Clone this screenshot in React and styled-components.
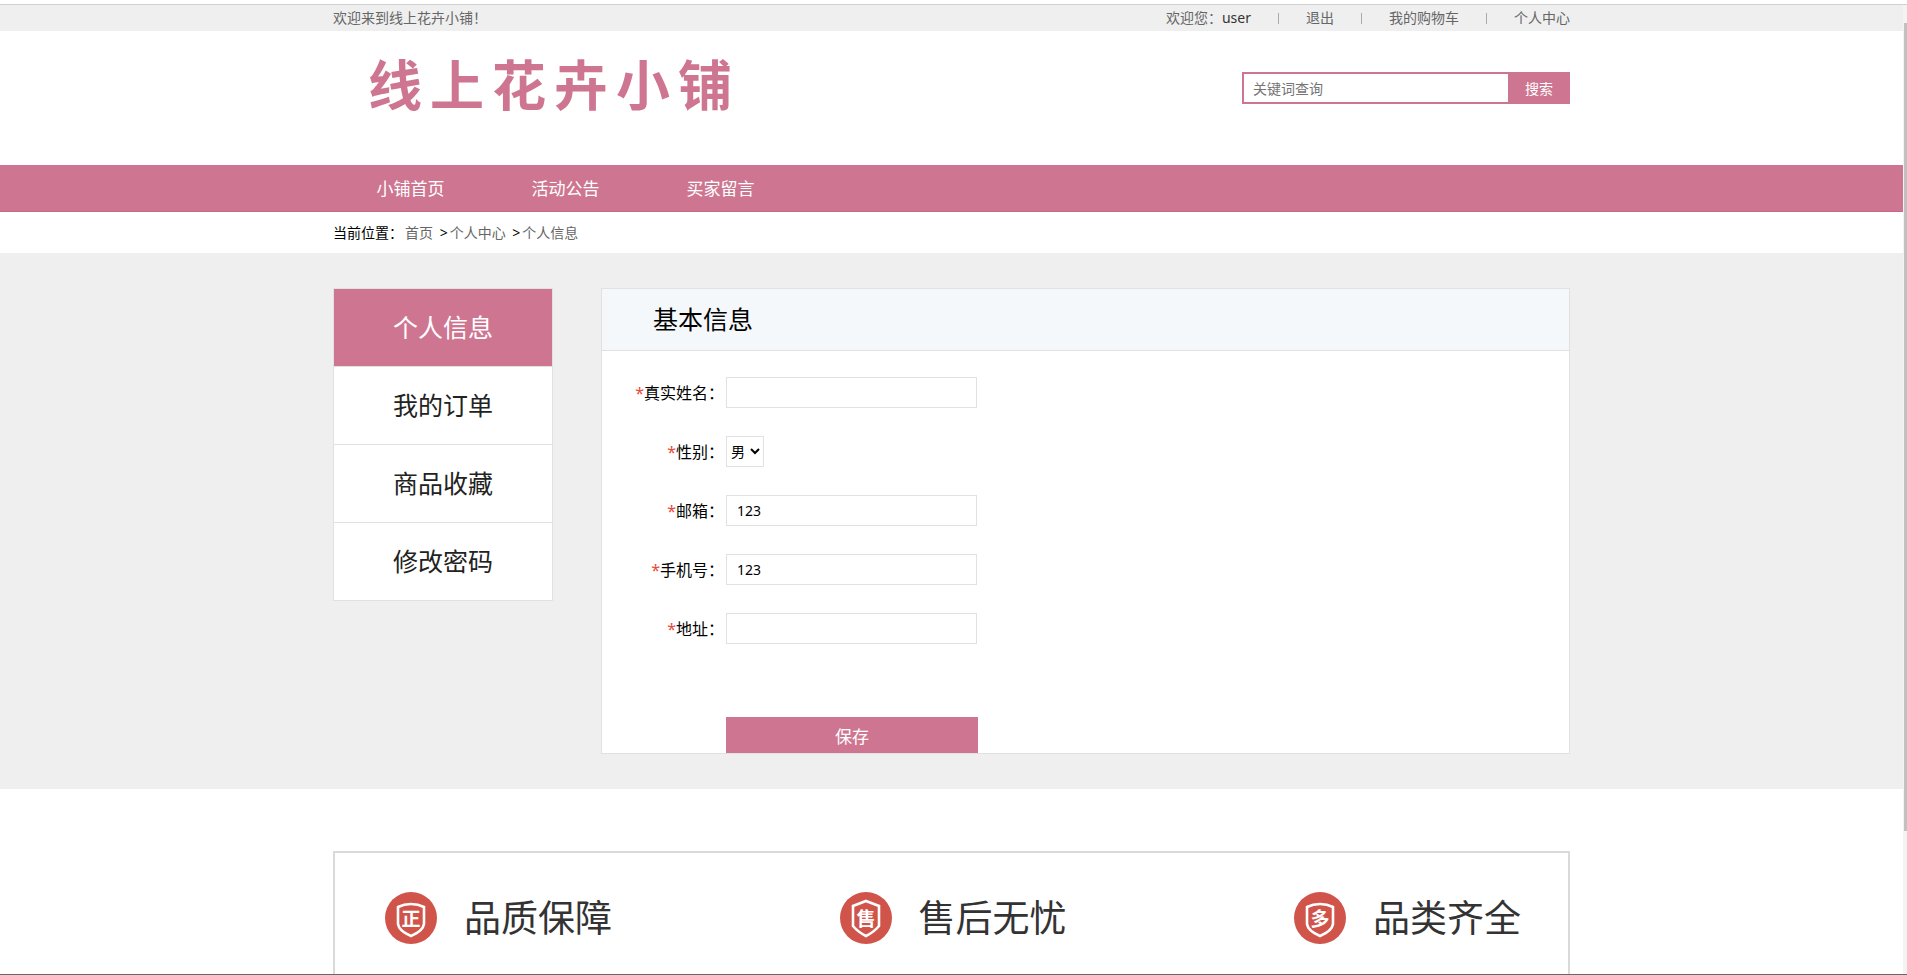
import React, { useState } from 'react';
import styled, { createGlobalStyle } from 'styled-components';

const navItems = ['小铺首页', '活动公告', '买家留言'];
const menuItems = ['个人信息', '我的订单', '商品收藏', '修改密码'];

const roundShield = 'M26 12 Q33 12 39 15 V32 Q38 39 26 44 Q14 39 13 32 V15 Q19 12 26 12 Z';
const sharpShield = 'M26 9 L39 14 V34 Q34 40 26 44 Q18 40 13 34 V14 Z';

const features = [
    { mark: '正', text: '品质保障', shield: roundShield },
    { mark: '售', text: '售后无忧', shield: sharpShield },
    { mark: '多', text: '品类齐全', shield: roundShield },
];

const FeatureIcon = ({ mark, shield }) => (
    <svg width="52" height="52" viewBox="0 0 52 52" aria-hidden="true">
        <circle cx="26" cy="26" r="26" fill="#d0544a" />
        <path d={shield} fill="none" stroke="#fff" strokeWidth="2.6" />
        <text x="26" y="34" textAnchor="middle" fontSize="19" fontWeight="700" fill="#fff">{mark}</text>
    </svg>
);

const App = () => {
    const [form, setForm] = useState({
        name: '',
        gender: '男',
        email: '123',
        phone: '123',
        address: '',
    });

    const handleChange = (e) => {
        setForm({ ...form, [e.target.name]: e.target.value });
    }

    return (
        <>
            <GlobalStyle />
            <Screen>
                <Page>
                    <TopBar>
                        <TopInner>
                            <span>欢迎来到线上花卉小铺！</span>
                            <UserLinks>
                                <span>欢迎您：<a href="#user">user</a></span>
                                <a href="#logout">退出</a>
                                <a href="#cart">我的购物车</a>
                                <a href="#center">个人中心</a>
                            </UserLinks>
                        </TopInner>
                    </TopBar>
                    <Header>
                        <Logo aria-label="线上花卉小铺">
                            {[...'线上花卉小铺'].map((c) => <span key={c}>{c}</span>)}
                        </Logo>
                        <Search onSubmit={(e) => e.preventDefault()}>
                            <input type="text" placeholder="关键词查询" aria-label="关键词查询" />
                            <button type="submit">搜索</button>
                        </Search>
                    </Header>
                    <NavBar>
                        <NavInner>
                            {navItems.map((item) => <a href="#nav" key={item}>{item}</a>)}
                        </NavInner>
                    </NavBar>
                    <Crumbs>
                        当前位置：<a href="#home">首页</a> &gt;<a href="#center">个人中心</a> &gt;<a href="#info">个人信息</a>
                    </Crumbs>
                    <Main>
                        <MainInner>
                            <SideMenu>
                                {menuItems.map((item, i) => (
                                    <MenuLink href="#menu" key={item} $active={i === 0}>{item}</MenuLink>
                                ))}
                            </SideMenu>
                            <Panel>
                                <PanelTitle>基本信息</PanelTitle>
                                <Form onSubmit={(e) => e.preventDefault()}>
                                    <Label htmlFor="name"><i>*</i>真实姓名：</Label>
                                    <TextInput id="name" name="name" value={form.name} onChange={handleChange} />
                                    <Label htmlFor="gender"><i>*</i>性别：</Label>
                                    <SelectInput id="gender" name="gender" value={form.gender} onChange={handleChange}>
                                        <option>男</option>
                                        <option>女</option>
                                    </SelectInput>
                                    <Label htmlFor="email"><i>*</i>邮箱：</Label>
                                    <TextInput id="email" name="email" value={form.email} onChange={handleChange} />
                                    <Label htmlFor="phone"><i>*</i>手机号：</Label>
                                    <TextInput id="phone" name="phone" value={form.phone} onChange={handleChange} />
                                    <Label htmlFor="address"><i>*</i>地址：</Label>
                                    <TextInput id="address" name="address" value={form.address} onChange={handleChange} />
                                    <SaveButton type="submit">保存</SaveButton>
                                </Form>
                            </Panel>
                        </MainInner>
                    </Main>
                    <Features>
                        {features.map((f) => (
                            <Feature key={f.mark}>
                                <FeatureIcon mark={f.mark} shield={f.shield} />
                                <span>{f.text}</span>
                            </Feature>
                        ))}
                    </Features>
                </Page>
                <ScrollTrack>
                    <ScrollThumb />
                </ScrollTrack>
            </Screen>
        </>
    )
}

const GlobalStyle = createGlobalStyle`
* {
    box-sizing: border-box;
}
body {
    margin: 0;
    background: #fff;
    color: #000;
    font-family: "Noto Sans", "Noto Sans CJK SC", sans-serif;
    font-size: 14px;
    line-height: 20px;
}
a {
    color: inherit;
    text-decoration: none;
}
input, select, button {
    font-family: inherit;
    margin: 0;
    border-radius: 0;
}
`;

const Screen = styled.div`
display: flex;
min-height: 100vh;
padding-top: 4px;
border-bottom: 1px solid #6b6768;
`;

const Page = styled.div`
flex: 1;
min-width: 0;
display: flex;
flex-direction: column;
`;

const ScrollTrack = styled.div`
width: 4px;
padding: 18px 0 0 1px;
border-top: 1px solid #d0d0d0;
background: #f3f3f3;
`;

const ScrollThumb = styled.div`
height: 85%;
background: #c1c1c1;
`;

const Wrap = styled.div`
width: 65%;
margin: 0 auto;
`;

const TopBar = styled.div`
background: #efefef;
border-top: 1px solid #d0d0d0;
`;

const TopInner = styled(Wrap)`
display: flex;
justify-content: space-between;
align-items: center;
height: 26px;
color: #666;
`;

const UserLinks = styled.div`
display: flex;
align-items: center;
> * {
    display: flex;
    align-items: center;
}
> * + *::before {
    content: "";
    width: 1px;
    height: 11px;
    margin: 0 27px;
    background: #aaa;
}
span a {
    color: #333;
}
`;

const Header = styled(Wrap)`
display: flex;
justify-content: space-between;
align-items: center;
height: 134px;
padding-bottom: 20px;
`;

const Logo = styled.h1`
display: flex;
gap: 8px;
margin: 0;
padding: 0 0 6px 35px;
color: #ce7691;
font-size: 54px;
line-height: 60px;
font-weight: 700;
`;

const Search = styled.form`
display: flex;
height: 32px;
input {
    width: 266px;
    padding: 0 9px;
    border: 2px solid #ce7691;
    border-right: 0;
    font-size: 14px;
    outline: none;
}
input::placeholder {
    color: #757575;
}
button {
    width: 62px;
    padding: 0;
    border: 0;
    background: #ce7691;
    color: #fff;
    font-size: 14px;
}
`;

const NavBar = styled.nav`
background: #ce7691;
border-bottom: 1px solid #cc6485;
`;

const NavInner = styled(Wrap)`
display: flex;
height: 46px;
a {
    width: 155px;
    color: #fff;
    font-size: 17px;
    line-height: 48px;
    text-align: center;
}
`;

const Crumbs = styled(Wrap)`
height: 41px;
line-height: 41px;
a {
    margin: 0 3px 0 2px;
    color: #666;
}
`;

const Main = styled.main`
padding: 35px 0;
background: #efefef;
`;

const MainInner = styled(Wrap)`
display: flex;
align-items: flex-start;
gap: 48px;
`;

const SideMenu = styled.aside`
width: 220px;
border: 1px solid #e1e1e1;
border-bottom: 0;
background: #fff;
`;

const MenuLink = styled.a`
display: block;
border-bottom: 1px solid #e1e1e1;
background: ${(props) => (props.$active ? '#ce7691' : '#fff')};
color: ${(props) => (props.$active ? '#fff' : '#222')};
font-size: 25px;
line-height: 77px;
text-align: center;
`;

const Panel = styled.section`
flex: 1;
border: 1px solid #e1e1e1;
background: #fff;
`;

const PanelTitle = styled.h2`
margin: 0;
padding-left: 51px;
border-bottom: 1px solid #e1e1e1;
background: #f5f8fb;
font-size: 25px;
line-height: 61px;
font-weight: 400;
`;

const Form = styled.form`
display: grid;
grid-template-columns: 124px 252px;
grid-auto-rows: minmax(31px, auto);
row-gap: 28px;
padding-top: 26px;
`;

const Label = styled.label`
padding-right: 2px;
font-size: 16px;
line-height: 33px;
height: 31px;
text-align: right;
i {
    color: #e64a3c;
    font-style: normal;
}
`;

const TextInput = styled.input`
width: 251px;
height: 31px;
padding: 0 10px;
border: 1px solid #e1e1e1;
font-size: 14px;
`;

const SelectInput = styled.select`
width: 38px;
height: 31px;
border: 1px solid #e1e1e1;
background: #fff;
color: #000;
font-size: 14px;
`;

const SaveButton = styled.button`
grid-column: 2;
height: 36px;
margin-top: 45px;
padding: 0;
border: 0;
background: #ce7691;
color: #fff;
font-size: 17px;
`;

const Features = styled(Wrap)`
flex: 1;
display: flex;
justify-content: space-between;
align-items: flex-start;
margin-top: 62px;
padding: 39px 47px 0 50px;
border: 2px solid #dadada;
border-bottom: 0;
`;

const Feature = styled.div`
display: flex;
align-items: center;
gap: 27px;
color: #333;
font-size: 37px;
line-height: 52px;
`;

export default App
